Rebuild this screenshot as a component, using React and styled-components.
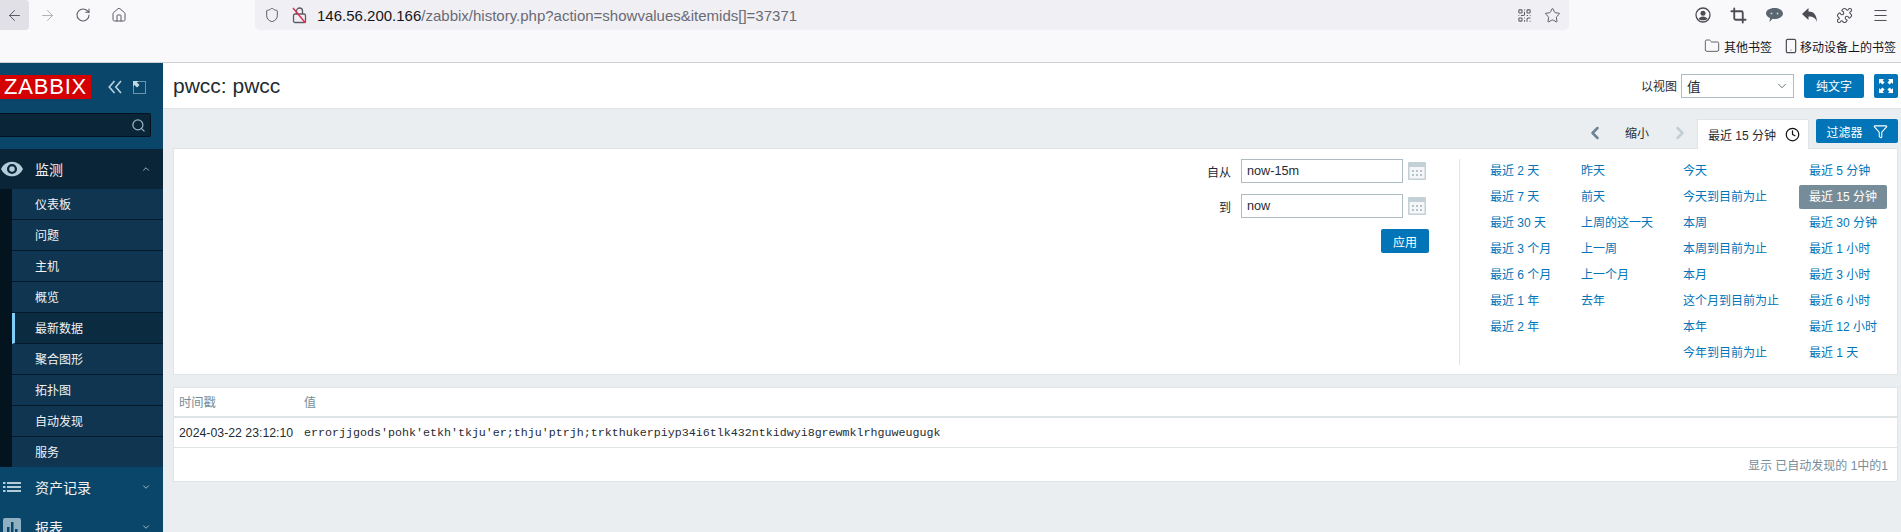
import React from 'react'
import styled, {createGlobalStyle} from 'styled-components'
import {
    ArrowLeft, ArrowRight, RotateCw, Home, Shield, QrCode, Star, Crop,
    Puzzle, Menu, Folder, Smartphone, Search, ChevronUp, ChevronDown,
    ChevronLeft, ChevronRight, Clock, Funnel,
} from 'lucide-react'

const GlobalStyle = createGlobalStyle`
    html, body {
        margin: 0;
        padding: 0;
        overflow: hidden;
    }
    body {
        font-family: "Liberation Sans", "Noto Sans CJK SC", sans-serif;
        font-size: 12px;
        color: #1f2c33;
    }
`

const Page = styled.div`
    width: 1901px;
    height: 532px;
    display: flex;
    flex-direction: column;
    overflow: hidden;
    background: #ebeef0;
`

/* browser chrome */
const Browser = styled.header`
    height: 62px;
    flex: none;
    background: #f9f9fb;
    border-bottom: 1px solid #cfcfd8;
`

const Toolbar = styled.div`
    height: 30px;
    display: flex;
    align-items: stretch;
`

const NavButtons = styled.div`
    width: 255px;
    flex: none;
    display: flex;
    align-items: center;
`

const NavButton = styled.div`
    width: ${(props) => props.$w || 36}px;
    height: 30px;
    flex: none;
    display: flex;
    align-items: center;
    justify-content: center;
    color: ${(props) => props.$dim ? '#b1b1b6' : '#5b5b66'};
    background: ${(props) => props.$active ? '#e0e0e6' : 'transparent'};
    border-radius: ${(props) => props.$active ? '0 4px 4px 0' : '0'};
`

const UrlBar = styled.div`
    width: 1314px;
    flex: none;
    display: flex;
    align-items: center;
    background: #f0f0f4;
    border-radius: 0 0 5px 5px;
    padding: 0 8px 0 9px;
    box-sizing: border-box;
    color: #5b5b66;
`

const LockIcon = styled.span`
    margin-left: 12px;
    display: flex;
`

const UrlText = styled.div`
    margin-left: 10px;
    flex: 1;
    font-size: 15px;
    color: #6a6a74;
    white-space: nowrap;
    b {
        font-weight: 400;
        color: #15141a;
    }
`

const UrlAction = styled.span`
    display: flex;
    margin-left: 12px;
`

const ToolIcons = styled.div`
    flex: 1;
    display: flex;
    align-items: center;
    padding-left: 126px;
    gap: 19px;
    color: #4c4c55;
`

const Bookmarks = styled.div`
    height: 32px;
    display: flex;
    align-items: center;
    justify-content: flex-end;
    padding-right: 5px;
    color: #15141a;
`

const Bookmark = styled.div`
    display: flex;
    align-items: center;
    gap: ${(props) => props.$gap}px;
    margin-left: 11px;
    color: #4c4c55;
    span {
        color: #15141a;
    }
`

/* zabbix */
const Main = styled.div`
    flex: 1;
    display: flex;
    min-height: 0;
`

const Sidebar = styled.aside`
    width: 163px;
    flex: none;
    background: #0a466a;
    color: #f2f2f2;
    overflow: hidden;
`

const LogoRow = styled.div`
    display: flex;
    align-items: center;
    padding-top: 12px;
    height: 24px;
`

const Logo = styled.div`
    width: 91px;
    height: 24px;
    background: #d40000;
    color: #fff;
    font-size: 22px;
    line-height: 24px;
    text-align: center;
    letter-spacing: 0.8px;
`

const LogoIcons = styled.div`
    display: flex;
    align-items: center;
    margin-left: 17px;
    gap: 11px;
`

const SideSearch = styled.div`
    width: 151px;
    height: 24px;
    margin-top: 14px;
    background: #0a2537;
    border: 1px solid #04131d;
    border-left: none;
    border-radius: 0 2px 2px 0;
    box-sizing: border-box;
    display: flex;
    align-items: center;
    justify-content: flex-end;
    padding-right: 4px;
    color: #9cb3c0;
`

const MenuGroup = styled.div`
    margin-top: 12px;
`

const MenuHead = styled.div`
    height: 39px;
    padding-bottom: 1px;
    display: flex;
    align-items: center;
    font-size: 14px;
    background: ${(props) => props.$open ? '#0a2438' : 'transparent'};
    position: relative;
`

const MenuIcon = styled.span`
    width: 24px;
    margin-right: 11px;
    display: flex;
    justify-content: center;
    color: #b4cbd9;
`

const MenuChevron = styled.span`
    position: absolute;
    left: 141px;
    display: flex;
    color: #b8ccd8;
`

const SubMenu = styled.div`
    border-left: 12px solid #03141f;
`

const SubItem = styled.div`
    height: 29px;
    padding-bottom: 1px;
    display: flex;
    align-items: center;
    padding-left: ${(props) => props.$active ? '20px' : '23px'};
    background: ${(props) => props.$active ? '#0b2b41' : '#0f3551'};
    border-left: ${(props) => props.$active ? '3px solid #7fcdfb' : 'none'};
    border-bottom: 1px solid #04192a;
    font-size: 12px;
    &:last-child {
        border-bottom: none;
    }
`

const Content = styled.main`
    flex: 1;
    min-width: 0;
`

const PageHeader = styled.div`
    height: 45px;
    background: #fff;
    border-bottom: 1px solid #dfe4e7;
    display: flex;
    align-items: center;
    padding: 0 3px 0 10px;
`

const Title = styled.h1`
    flex: 1;
    margin: 0;
    font-size: 21px;
    font-weight: 400;
`

const ViewLabel = styled.label`
    margin-right: 4px;
`

const Select = styled.div`
    width: 113px;
    height: 24px;
    box-sizing: border-box;
    border: 1px solid #acbbc4;
    display: flex;
    align-items: center;
    justify-content: space-between;
    padding: 0 4px 0 5px;
    font-size: 13.5px;
    color: #1f2c33;
    margin-right: 10px;
`

const Button = styled.button`
    height: 24px;
    width: ${(props) => props.$w}px;
    border: none;
    border-radius: 2px;
    background: #0275b8;
    color: #fff;
    font: inherit;
    padding: 0;
    margin-left: ${(props) => props.$ml || 0}px;
    display: flex;
    align-items: center;
    justify-content: center;
    gap: ${(props) => props.$gap || 0}px;
`

const Tabs = styled.div`
    height: 29px;
    margin-top: 10px;
    display: flex;
    align-items: flex-start;
    justify-content: flex-end;
    padding-right: 3px;
`

const TabNav = styled.div`
    width: ${(props) => props.$w}px;
    height: 27px;
    display: flex;
    align-items: center;
    justify-content: center;
    color: ${(props) => props.$dim ? '#c2ced5' : props.$arrow ? '#6b8593' : '#1f2c33'};
`

const ActiveTab = styled.div`
    width: 112px;
    height: 30px;
    box-sizing: border-box;
    margin-left: 5px;
    background: #fff;
    border: 1px solid #dfe4e7;
    border-bottom: none;
    display: flex;
    align-items: center;
    gap: 9px;
    padding-left: 10px;
`

const FilterPanel = styled.section`
    margin: 0 3px 0 10px;
    height: 227px;
    box-sizing: border-box;
    background: #fff;
    border: 1px solid #dfe4e7;
    display: flex;
    padding-top: 10px;
`

const DateForm = styled.div`
    width: 1255px;
    flex: none;
    display: flex;
    flex-direction: column;
    align-items: flex-end;
    gap: 11px;
`

const DateRow = styled.div`
    display: flex;
    align-items: center;
    padding-right: 3px;
`

const DateLabel = styled.label`
    padding-right: 10px;
    text-align: right;
    flex: none;
`

const DateInput = styled.div`
    width: 162px;
    height: 24px;
    box-sizing: border-box;
    border: 1px solid #acbbc4;
    padding: 0 5px;
    line-height: 22px;
    font-size: 12.7px;
    flex: none;
`

const CalendarIcon = styled.span`
    display: flex;
    margin-left: 5px;
`

const Presets = styled.div`
    flex: 1;
    border-left: 1px solid #dfe4e7;
    height: 206px;
    margin-left: 30px;
    padding-left: 30px;
    display: grid;
    grid-template-columns: 91px 102px 126px 1fr;
`

const PresetColumn = styled.div`
    display: flex;
    flex-direction: column;
    gap: 2px;
`

const Preset = styled.a`
    height: 24px;
    line-height: 24px;
    color: ${(props) => props.$current ? '#fff' : '#0275b8'};
    background: ${(props) => props.$current ? '#768d99' : 'transparent'};
    border-radius: 2px;
    padding: 0 10px;
    margin-left: -10px;
    width: 88px;
    box-sizing: border-box;
    white-space: nowrap;
`

const Table = styled.section`
    margin: 12px 3px 0 10px;
    height: 95px;
    box-sizing: border-box;
    background: #fff;
    border: 1px solid #dfe4e7;
`

const HeadRow = styled.div`
    height: 27px;
    padding: 0 0 1px 5px;
    display: flex;
    align-items: center;
    border-bottom: 2px solid #dfe4e7;
    color: #768d99;
`

const DataRow = styled.div`
    height: 29px;
    display: flex;
    align-items: center;
    border-bottom: 1px solid #dfe4e7;
    padding-left: 5px;
`

const TimeCell = styled.div`
    width: 125px;
    flex: none;
    font-size: 12.3px;
`

const ValueCell = styled.div`
    font-family: "Liberation Mono", monospace;
    font-size: 11.67px;
    white-space: pre;
`

const TableFooter = styled.div`
    height: 33px;
    display: flex;
    align-items: center;
    justify-content: flex-end;
    padding-right: 9px;
    color: #768d99;
`

const presetColumns = [
    ['最近 2 天', '最近 7 天', '最近 30 天', '最近 3 个月', '最近 6 个月', '最近 1 年', '最近 2 年'],
    ['昨天', '前天', '上周的这一天', '上一周', '上一个月', '去年'],
    ['今天', '今天到目前为止', '本周', '本周到目前为止', '本月', '这个月到目前为止', '本年', '今年到目前为止'],
    ['最近 5 分钟', '最近 15 分钟', '最近 30 分钟', '最近 1 小时', '最近 3 小时', '最近 6 小时', '最近 12 小时', '最近 1 天'],
]

const subItems = ['仪表板', '问题', '主机', '概览', '最新数据', '聚合图形', '拓扑图', '自动发现', '服务']

const Calendar = () => (
    <svg width="18" height="18" viewBox="0 0 18 18">
        <rect width="18" height="18" rx="1" fill="#c4d0d6" />
        <rect x="1.500" y="5" width="15" height="11.500" fill="#f4f6f7" />
        {[8, 12].map((y) => [4, 8, 12].map((x) => (
            <rect key={`${x}-${y}`} x={x} y={y} width="2" height="2" fill="#b5c3ca" />
        )))}
    </svg>
)

const LockSlash = () => (
    <svg width="15" height="18" viewBox="0 0 15 18" fill="none">
        <rect x="1.500" y="8" width="12" height="8.500" rx="1.500" stroke="#5b5b66" strokeWidth="1.300" />
        <path d="M4.500 8V5a3 3 0 0 1 6 0v3" stroke="#5b5b66" strokeWidth="1.300" />
        <path d="M1 2l12.500 15" stroke="#e22850" strokeWidth="1.400" />
    </svg>
)

const Expand = () => (
    <svg width="14" height="14" viewBox="0 0 14 14" fill="#fff">
        <path d="M0 0h5L3.600 1.400 5.600 3.400 3.400 5.600 1.400 3.600 0 5zM14 0v5l-1.400-1.400-2 2-2.200-2.200 2-2L9 0zM0 14V9l1.400 1.400 2-2 2.200 2.200-2 2L5 14zM14 14H9l1.400-1.400-2-2 2.200-2.200 2 2L14 9z" />
    </svg>
)

const DoubleLeft = () => (
    <svg width="14" height="14" viewBox="0 0 14 14" fill="none" stroke="#b5cfdd" strokeWidth="1.700">
        <path d="M6.500 1L1.300 7l5.200 6M13 1L7.800 7l5.200 6" />
    </svg>
)

const CollapseIcon = () => (
    <svg width="13" height="13" viewBox="0 0 13 13" fill="none">
        <rect x="0.500" y="0.500" width="12" height="12" stroke="#d5e3eb" strokeDasharray="1 1" />
        <path d="M0 0h5.500L4 1.500 6.500 4 4 6.500 1.500 4 0 5.500z" fill="#c4d8e3" />
    </svg>
)

const EyeIcon = () => (
    <svg width="22" height="16" viewBox="0 0 24 16">
        <path fillRule="evenodd" fill="#b4cbd9" d="M12 0C6.500 0 2.300 3.300 0 8c2.300 4.700 6.500 8 12 8s9.700-3.300 12-8c-2.300-4.700-6.500-8-12-8zm0 2.500a5.500 5.500 0 1 1 0 11 5.500 5.500 0 0 1 0-11zm0 2.500a3 3 0 1 0 0 6 3 3 0 0 0 0-6z" />
    </svg>
)

const ListIcon = () => (
    <svg width="18" height="10" viewBox="0 0 18 10" fill="#b4cbd9">
        <rect x="0" y="0" width="2.500" height="2" />
        <rect x="4" y="0" width="14" height="2" />
        <rect x="0" y="4" width="2.500" height="2" />
        <rect x="4" y="4" width="14" height="2" />
        <rect x="0" y="8" width="2.500" height="2" />
        <rect x="4" y="8" width="14" height="2" />
    </svg>
)

const ReportIcon = () => (
    <svg width="18" height="18" viewBox="0 0 18 18">
        <rect width="18" height="18" rx="2" fill="#8fb0c3" />
        <rect x="4" y="9" width="2.500" height="7" fill="#0a466a" />
        <rect x="8" y="4" width="2.500" height="12" fill="#0a466a" />
        <rect x="12" y="11" width="2.500" height="5" fill="#0a466a" />
    </svg>
)

const UserIcon = () => (
    <svg width="16" height="16" viewBox="0 0 16 16">
        <circle cx="8" cy="8" r="7" fill="none" stroke="#4c4c55" strokeWidth="1.300" />
        <circle cx="8" cy="6.300" r="2.500" fill="#4c4c55" />
        <path fill="#4c4c55" d="M3.500 12c.8-1.800 2.500-2.600 4.500-2.600s3.700.8 4.500 2.600c-1 .8-2.700 1.300-4.500 1.300S4.500 12.800 3.500 12z" />
    </svg>
)

const ChatIcon = () => (
    <svg width="17" height="14" viewBox="0 0 17 14">
        <path fill="#5a6670" d="M8.500 0C13.200 0 17 2.300 17 5.500S13.200 11 8.500 11c-.7 0-1.400-.1-2-.2L3.500 14l.5-4C1.600 9 0 7.400 0 5.500 0 2.300 3.800 0 8.500 0z" />
        <circle cx="5.500" cy="5.500" r="1" fill="#c4ccd2" />
        <circle cx="11.500" cy="5.500" r="1" fill="#c4ccd2" />
    </svg>
)

const ReplyIcon = () => (
    <svg width="15" height="14" viewBox="0 0 15 14">
        <path fill="#4c4c55" d="M6.500 0v3.500C11.500 3.500 14.800 6.500 15 14c-1.200-3.600-3.500-5.500-8.500-5.500V12L0 6z" />
    </svg>
)

const App = () => {
    return (
        <Page>
            <GlobalStyle />
            <Browser>
                <Toolbar>
                    <NavButtons>
                        <NavButton $active $w={29}><ArrowLeft size={17} strokeWidth={1.4} /></NavButton>
                        <NavButton $dim><ArrowRight size={17} strokeWidth={1.4} /></NavButton>
                        <NavButton><RotateCw size={16} strokeWidth={1.6} /></NavButton>
                        <NavButton><Home size={16} strokeWidth={1.5} /></NavButton>
                    </NavButtons>
                    <UrlBar>
                        <Shield size={16} strokeWidth={1.5} />
                        <LockIcon><LockSlash /></LockIcon>
                        <UrlText><b>146.56.200.166</b>/zabbix/history.php?action=showvalues&amp;itemids[]=37371</UrlText>
                        <UrlAction><QrCode size={15} strokeWidth={1.7} /></UrlAction>
                        <UrlAction><Star size={17} strokeWidth={1.4} /></UrlAction>
                    </UrlBar>
                    <ToolIcons>
                        <UserIcon />
                        <Crop size={17} strokeWidth={2.6} />
                        <ChatIcon />
                        <ReplyIcon />
                        <Puzzle size={17} strokeWidth={1.5} />
                        <Menu size={17} strokeWidth={1.4} />
                    </ToolIcons>
                </Toolbar>
                <Bookmarks>
                    <Bookmark $gap={4}><Folder size={16} strokeWidth={1.3} /><span>其他书签</span></Bookmark>
                    <Bookmark $gap={1}><Smartphone size={16} strokeWidth={1.8} /><span>移动设备上的书签</span></Bookmark>
                </Bookmarks>
            </Browser>

            <Main>
                <Sidebar>
                    <LogoRow>
                        <Logo>ZABBIX</Logo>
                        <LogoIcons>
                            <DoubleLeft />
                            <CollapseIcon />
                        </LogoIcons>
                    </LogoRow>
                    <SideSearch><Search size={15} strokeWidth={2} /></SideSearch>
                    <MenuGroup>
                        <MenuHead $open>
                            <MenuIcon><EyeIcon /></MenuIcon>
                            监测
                            <MenuChevron><ChevronUp size={10} strokeWidth={2} /></MenuChevron>
                        </MenuHead>
                        <SubMenu>
                            {subItems.map((item) => (
                                <SubItem key={item} $active={item === '最新数据'}>{item}</SubItem>
                            ))}
                        </SubMenu>
                        <MenuHead>
                            <MenuIcon><ListIcon /></MenuIcon>
                            资产记录
                            <MenuChevron><ChevronDown size={10} strokeWidth={2} /></MenuChevron>
                        </MenuHead>
                        <MenuHead>
                            <MenuIcon><ReportIcon /></MenuIcon>
                            报表
                            <MenuChevron><ChevronDown size={10} strokeWidth={2} /></MenuChevron>
                        </MenuHead>
                    </MenuGroup>
                </Sidebar>

                <Content>
                    <PageHeader>
                        <Title>pwcc: pwcc</Title>
                        <ViewLabel>以视图</ViewLabel>
                        <Select>值<ChevronDown size={14} strokeWidth={1.6} color="#5b6b75" /></Select>
                        <Button $w={60}>纯文字</Button>
                        <Button $w={24} $ml={10}><Expand /></Button>
                    </PageHeader>

                    <Tabs>
                        <TabNav $w={24} $arrow><ChevronLeft size={20} strokeWidth={3} /></TabNav>
                        <TabNav $w={60}>缩小</TabNav>
                        <TabNav $w={25} $arrow $dim><ChevronRight size={20} strokeWidth={3} /></TabNav>
                        <ActiveTab>最近 15 分钟<Clock size={15} strokeWidth={2} color="#111" /></ActiveTab>
                        <Button $w={82} $ml={7} $gap={10}>过滤器<Funnel size={15} strokeWidth={1.7} /></Button>
                    </Tabs>

                    <FilterPanel>
                        <DateForm>
                            <DateRow>
                                <DateLabel>自从</DateLabel>
                                <DateInput>now-15m</DateInput>
                                <CalendarIcon><Calendar /></CalendarIcon>
                            </DateRow>
                            <DateRow>
                                <DateLabel>到</DateLabel>
                                <DateInput>now</DateInput>
                                <CalendarIcon><Calendar /></CalendarIcon>
                            </DateRow>
                            <Button $w={48}>应用</Button>
                        </DateForm>
                        <Presets>
                            {presetColumns.map((column, i) => (
                                <PresetColumn key={i}>
                                    {column.map((label) => (
                                        <Preset key={label} $current={label === '最近 15 分钟'}>{label}</Preset>
                                    ))}
                                </PresetColumn>
                            ))}
                        </Presets>
                    </FilterPanel>

                    <Table>
                        <HeadRow>
                            <TimeCell>时间戳</TimeCell>
                            <div>值</div>
                        </HeadRow>
                        <DataRow>
                            <TimeCell>2024-03-22 23:12:10</TimeCell>
                            <ValueCell>errorjjgods'pohk'etkh'tkju'er;thju'ptrjh;trkthukerpiyp34i6tlk432ntkidwyi8grewmklrhguweugugk</ValueCell>
                        </DataRow>
                        <TableFooter>显示 已自动发现的 1中的1</TableFooter>
                    </Table>
                </Content>
            </Main>
        </Page>
    )
}

export default App
